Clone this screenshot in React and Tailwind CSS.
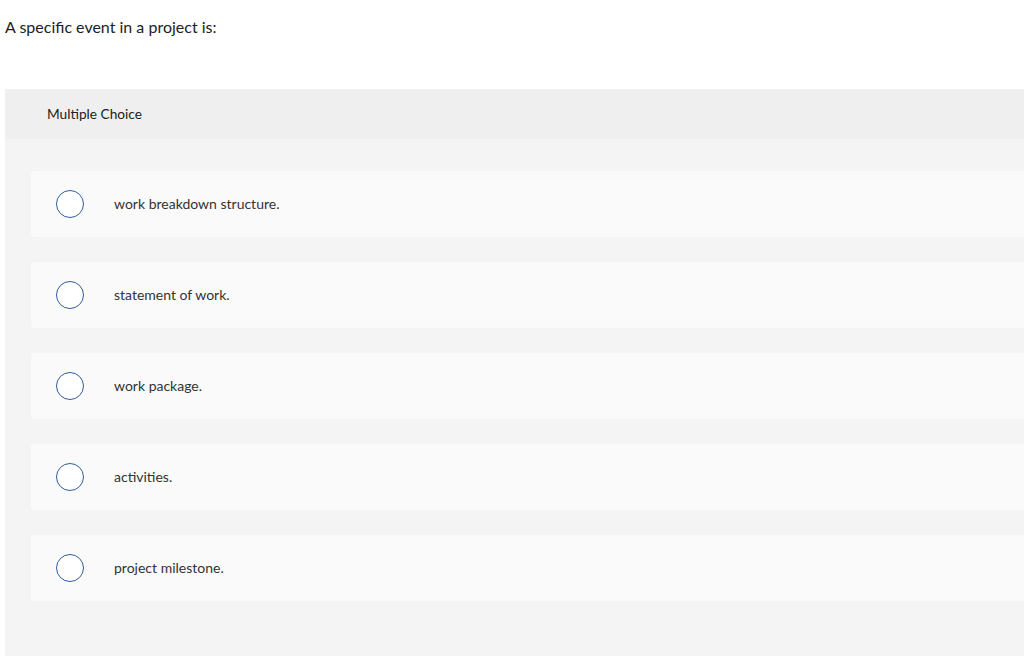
import React from 'react';

const options = [
  'work breakdown structure.',
  'statement of work.',
  'work package.',
  'activities.',
  'project milestone.',
];

export default function App() {
  return (
    <div className="w-[1024px] h-[656px] overflow-hidden bg-white text-[#222] font-['Lato',sans-serif]">
      <p className="pl-[5px] pt-[17px] text-[16px] leading-[20px]">A specific event in a project is:</p>
      <div className="ml-[5px] mt-[52px] bg-[#f4f4f4] h-[600px]">
        <div className="h-[50px] bg-[#efefef] flex items-center pl-[42px] text-[13.7px]">Multiple Choice</div>
        <div className="pt-[32px] pl-[26px] flex flex-col gap-[25px]">
          {options.map((opt, i) => (
            <div key={i} className="h-[66px] bg-[#fafafa] flex items-center rounded-l-[3px]">
              <span className="ml-[25px] w-[28px] h-[28px] rounded-full border-[1.5px] border-[#2f5d9c] bg-white shrink-0" />
              <span className="ml-[30px] text-[14px] leading-[20px] text-[#333]">{opt}</span>
            </div>
          ))}
        </div>
      </div>
    </div>
  );
}
